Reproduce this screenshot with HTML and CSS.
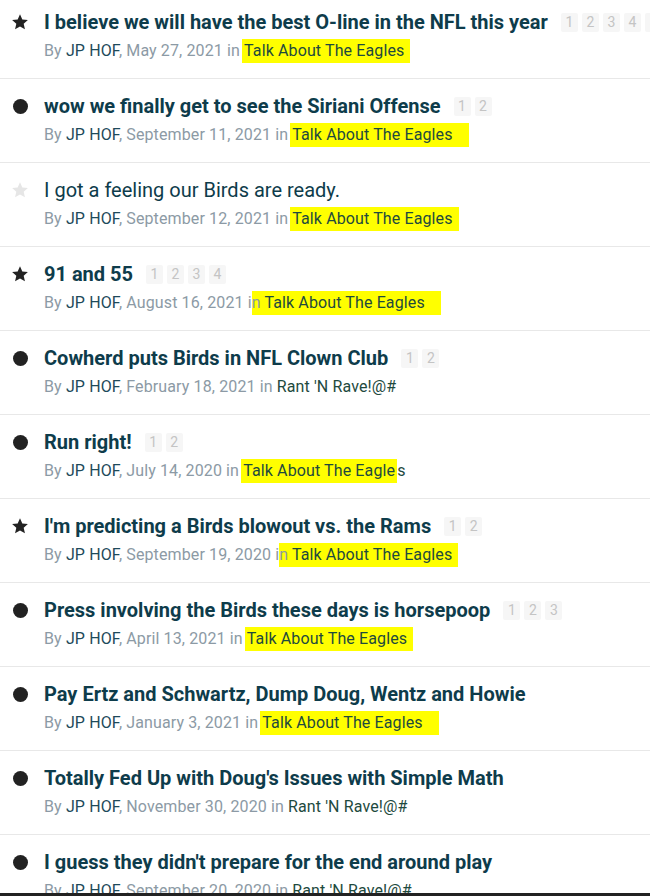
FILE: index.html
```html
<!DOCTYPE html>
<html>
<head>
<meta charset="utf-8">
<link rel="stylesheet" href="styles.css">
</head>
<body>
<svg width="0" height="0" class="defs">
  <defs>
    <symbol id="star" viewBox="0 0 24 24"><path d="M12 1.8l3.1 6.9 7.4.7-5.6 5 1.7 7.4L12 17.9l-6.6 3.9 1.7-7.4-5.6-5 7.4-.7z"/></symbol>
  </defs>
</svg>
<ul class="topics">
  <li class="topic">
    <div class="ic"><svg class="star"><use href="#star"/></svg></div>
    <div class="body">
      <div class="title-line"><span class="title">I believe we will have the best O-line in the NFL this year</span><span class="pages"><span class="pg">1</span><span class="pg">2</span><span class="pg">3</span><span class="pg">4</span><span class="pg">5</span></span></div>
      <div class="meta">By <span class="au">JP HOF</span>, May 27, 2021 in <span class="forum hl hl-a">Talk About The Eagles</span></div>
    </div>
  </li>
  <li class="topic">
    <div class="ic"><span class="dot"></span></div>
    <div class="body">
      <div class="title-line"><span class="title">wow we finally get to see the Siriani Offense</span><span class="pages"><span class="pg">1</span><span class="pg">2</span></span></div>
      <div class="meta">By <span class="au">JP HOF</span>, September 11, 2021 in <span class="forum hl hl-b">Talk About The Eagles</span></div>
    </div>
  </li>
  <li class="topic">
    <div class="ic"><svg class="star light"><use href="#star"/></svg></div>
    <div class="body">
      <div class="title-line"><span class="title read">I got a feeling our Birds are ready.</span></div>
      <div class="meta">By <span class="au">JP HOF</span>, September 12, 2021 in <span class="forum hl hl-c">Talk About The Eagles</span></div>
    </div>
  </li>
  <li class="topic">
    <div class="ic"><svg class="star"><use href="#star"/></svg></div>
    <div class="body">
      <div class="title-line"><span class="title">91 and 55</span><span class="pages"><span class="pg">1</span><span class="pg">2</span><span class="pg">3</span><span class="pg">4</span></span></div>
      <div class="meta">By <span class="au">JP HOF</span>, August 16, 2021 i<span class="hl-n">n </span><span class="forum hl hl-b hl-join">Talk About The Eagles</span></div>
    </div>
  </li>
  <li class="topic">
    <div class="ic"><span class="dot"></span></div>
    <div class="body">
      <div class="title-line"><span class="title">Cowherd puts Birds in NFL Clown Club</span><span class="pages"><span class="pg">1</span><span class="pg">2</span></span></div>
      <div class="meta">By <span class="au">JP HOF</span>, February 18, 2021 in <span class="forum">Rant 'N Rave!@#</span></div>
    </div>
  </li>
  <li class="topic">
    <div class="ic"><span class="dot"></span></div>
    <div class="body">
      <div class="title-line"><span class="title">Run right!</span><span class="pages"><span class="pg">1</span><span class="pg">2</span></span></div>
      <div class="meta">By <span class="au">JP HOF</span>, July 14, 2020 in <span class="forum"><span class="hl">Talk About The Eagle</span>s</span></div>
    </div>
  </li>
  <li class="topic">
    <div class="ic"><svg class="star"><use href="#star"/></svg></div>
    <div class="body">
      <div class="title-line"><span class="title">I'm predicting a Birds blowout vs. the Rams</span><span class="pages"><span class="pg">1</span><span class="pg">2</span></span></div>
      <div class="meta">By <span class="au">JP HOF</span>, September 19, 2020 i<span class="hl-n">n </span><span class="forum hl hl-c hl-join">Talk About The Eagles</span></div>
    </div>
  </li>
  <li class="topic">
    <div class="ic"><span class="dot"></span></div>
    <div class="body">
      <div class="title-line"><span class="title">Press involving the Birds these days is horsepoop</span><span class="pages"><span class="pg">1</span><span class="pg">2</span><span class="pg">3</span></span></div>
      <div class="meta">By <span class="au">JP HOF</span>, April 13, 2021 in <span class="forum hl hl-a">Talk About The Eagles</span></div>
    </div>
  </li>
  <li class="topic">
    <div class="ic"><span class="dot"></span></div>
    <div class="body">
      <div class="title-line"><span class="title">Pay Ertz and Schwartz, Dump Doug, Wentz and Howie</span></div>
      <div class="meta">By <span class="au">JP HOF</span>, January 3, 2021 in <span class="forum hl hl-b">Talk About The Eagles</span></div>
    </div>
  </li>
  <li class="topic">
    <div class="ic"><span class="dot"></span></div>
    <div class="body">
      <div class="title-line"><span class="title">Totally Fed Up with Doug's Issues with Simple Math</span></div>
      <div class="meta">By <span class="au">JP HOF</span>, November 30, 2020 in <span class="forum">Rant 'N Rave!@#</span></div>
    </div>
  </li>
  <li class="topic">
    <div class="ic"><span class="dot"></span></div>
    <div class="body">
      <div class="title-line"><span class="title">I guess they didn't prepare for the end around play</span></div>
      <div class="meta">By <span class="au">JP HOF</span>, September 20, 2020 in <span class="forum">Rant 'N Rave!@#</span></div>
    </div>
  </li>
</ul>
<div class="bottom-bar"></div>
</body>
</html>
```

FILE: styles.css
```css
html, body {
  margin: 0;
  padding: 0;
  background: #fff;
  overflow: hidden;
}
body {
  font-family: Roboto, "Liberation Sans", sans-serif;
  width: 650px;
  height: 896px;
}
.defs {
  position: absolute;
  width: 0;
  height: 0;
}
.topics {
  list-style: none;
  margin: -5px 0 0 0;
  padding: 0;
}
.topic {
  display: flex;
  height: 84px;
  box-sizing: border-box;
  border-bottom: 1px solid #e8e8e8;
  padding-top: 14px;
}
.ic {
  width: 44px;
  flex: none;
  display: flex;
  justify-content: center;
  padding-right: 4px;
  box-sizing: border-box;
  height: 26px;
  align-items: center;
}
.star {
  width: 18px;
  height: 18px;
  fill: #222;
}
.star.light {
  fill: #e6e6e6;
}
.dot {
  width: 15px;
  height: 15px;
  border-radius: 50%;
  background: #222;
}
.body {
  flex: 1;
  min-width: 0;
}
.title-line {
  display: flex;
  align-items: center;
  height: 26px;
  white-space: nowrap;
}
.title {
  font-size: 20px;
  font-weight: 700;
  color: #0e3c4b;
}
.title.read {
  font-weight: 400;
}
.pages {
  display: flex;
  gap: 4px;
  margin-left: 13px;
}
.pg {
  display: inline-flex;
  align-items: center;
  justify-content: center;
  width: 17px;
  height: 19px;
  background: #f6f6f6;
  color: #c4c4c4;
  font-size: 14px;
  border-radius: 2px;
}
.meta {
  margin-top: 5px;
  font-size: 16px;
  line-height: 22px;
  letter-spacing: 0.12px;
  color: #8c9aa5;
  white-space: nowrap;
}
.au {
  color: #1e4a5a;
}
.forum {
  color: #1e4a3e;
}
.hl {
  background: #ffff00;
  padding: 2px 2px 3px 2px;
  margin-left: -2px;
}
.hl-a {
  padding-right: 6px;
}
.hl-b {
  padding-right: 16px;
}
.hl-c {
  padding-right: 6px;
}
.hl-join {
  margin-left: 0;
  padding-left: 0;
}
.hl-n {
  background: #ffff00;
  padding: 2px 0 3px;
}
.bottom-bar {
  position: fixed;
  left: 0;
  right: 0;
  bottom: 0;
  height: 3px;
  background: #222;
}
```
